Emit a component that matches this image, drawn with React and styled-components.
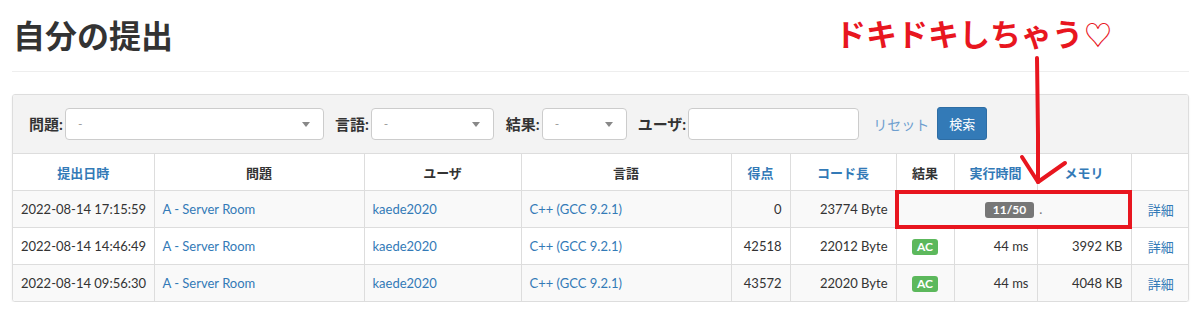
import React from 'react';
import styled, { createGlobalStyle } from 'styled-components';

const GlobalStyle = createGlobalStyle`
  html, body { margin: 0; padding: 0; background: #fff; }
  body {
    font-family: Lato, "Noto Sans CJK JP", sans-serif;
    color: #333;
    font-size: 14px;
  }
`;

const RED = '#e8161f';
const LINK = '#337ab7';

const columns = [
  { label: '提出日時', width: 141, link: true },
  { label: '問題', width: 210 },
  { label: 'ユーザ', width: 157 },
  { label: '言語', width: 210 },
  { label: '得点', width: 59, link: true },
  { label: 'コード長', width: 106, link: true },
  { label: '結果', width: 58 },
  { label: '実行時間', width: 83, link: true },
  { label: 'メモリ', width: 94, link: true },
  { label: '', width: 59 },
];

const rows = [
  { date: '2022-08-14 17:15:59', score: '0', length: '23774 Byte', judging: '11/50' },
  { date: '2022-08-14 14:46:49', score: '42518', length: '22012 Byte', result: 'AC', time: '44 ms', memory: '3992 KB' },
  { date: '2022-08-14 09:56:30', score: '43572', length: '22020 Byte', result: 'AC', time: '44 ms', memory: '4048 KB' },
];

const Page = styled.div`
  position: relative;
  padding: 16px 11px 0 12px;
`;

const Title = styled.h2`
  margin: 0 0 0 1px;
  font-size: 32px;
  line-height: 36px;
  font-weight: 700;
  color: #333;
  font-family: "Noto Sans CJK JP", sans-serif;
`;

const Rule = styled.hr`
  margin: 19px 0 22px;
  border: 0;
  border-top: 1px solid #eee;
`;

const Panel = styled.div`
  border: 1px solid #ddd;
  border-radius: 3px;
  box-shadow: 0 1px 2px rgba(0, 0, 0, 0.08);
  overflow: hidden;
`;

const FilterBar = styled.div`
  display: flex;
  align-items: center;
  background: #f3f3f3;
  padding: 12px 16px 13px 16px;
  border-bottom: 1px solid #ddd;
`;

const Label = styled.span`
  font-weight: 700;
  font-size: 15px;
  margin-right: 2px;
  margin-left: ${p => p.$gap || 0}px;
  white-space: nowrap;
`;

const Select = styled.div`
  position: relative;
  width: ${p => p.$w}px;
  height: 32px;
  box-sizing: border-box;
  background: #fff;
  border: 1px solid #ccc;
  border-radius: 4px;
  display: flex;
  align-items: center;
  padding-left: 12px;
  color: #999;
  font-size: 12px;

  &::after {
    content: '';
    position: absolute;
    right: 13px;
    top: 13px;
    border-left: 4px solid transparent;
    border-right: 4px solid transparent;
    border-top: 5px solid #888;
  }
`;

const TextInput = styled.div`
  width: ${p => p.$w}px;
  height: 32px;
  box-sizing: border-box;
  background: #fff;
  border: 1px solid #ccc;
  border-radius: 4px;
`;

const ResetLink = styled.span`
  color: #6f9fcf;
  font-size: 14px;
  margin-left: 14px;
`;

const SearchButton = styled.span`
  margin-left: 8px;
  background: ${LINK};
  color: #fff;
  border: 1px solid #2e6da4;
  border-radius: 3px;
  height: 33px;
  width: 50px;
  box-sizing: border-box;
  display: flex;
  align-items: center;
  justify-content: center;
  font-size: 13px;
`;

const Table = styled.table`
  width: 100%;
  border-collapse: collapse;
  table-layout: fixed;
  font-size: 13px;
`;

const Th = styled.th`
  height: 36px;
  padding: 0 8px;
  border-left: 1px solid #ddd;
  font-weight: 700;
  font-size: 13px;
  color: ${p => (p.$link ? LINK : '#333')};
  text-align: center;
  &:first-child { border-left: 0; }
`;

const Row = styled.tr`
  background: ${p => (p.$odd ? '#f9f9f9' : '#fff')};
  border-top: 1px solid #ddd;
`;

const Td = styled.td`
  height: 36px;
  padding: 0 8px;
  border-left: 1px solid #ddd;
  text-align: ${p => p.$align || 'left'};
  color: ${p => (p.$link ? LINK : '#333')};
  white-space: nowrap;
  overflow: hidden;
  &:first-child { border-left: 0; }
`;

const Badge = styled.span`
  display: inline-block;
  padding: 2px ${p => (p.$ok ? 5 : 8)}px 2px;
  border-radius: 3px;
  font-size: 12px;
  font-weight: 700;
  line-height: 12px;
  color: #fff;
  background: ${p => (p.$ok ? '#5cb85c' : '#777')};
`;

const Dot = styled.span`
  margin-left: 5px;
  color: #777;
`;

const Note = styled.div`
  position: absolute;
  left: 835px;
  top: 13px;
  color: ${RED};
  font-size: 31px;
  font-weight: 700;
  font-family: "Noto Sans CJK JP", sans-serif;
  line-height: 40px;
`;

const Heart = styled.span`
  font-size: 28px;
  font-weight: 400;
  margin-left: 1px;
`;

const Arrow = styled.svg`
  position: absolute;
  left: 1010px;
  top: 55px;
  overflow: visible;
`;

const Highlight = styled.div`
  position: absolute;
  left: 895px;
  top: 190px;
  width: 237px;
  height: 39px;
  box-sizing: border-box;
  border: 4px solid ${RED};
`;

export default function App() {
  return (
    <>
      <GlobalStyle />
      <Page>
        <Title>自分の提出</Title>
        <Rule />
        <Panel>
          <FilterBar>
            <Label>問題:</Label>
            <Select $w={259}>-</Select>
            <Label $gap={11}>言語:</Label>
            <Select $w={123}>-</Select>
            <Label $gap={12}>結果:</Label>
            <Select $w={85}>-</Select>
            <Label $gap={11}>ユーザ:</Label>
            <TextInput $w={171} />
            <ResetLink>リセット</ResetLink>
            <SearchButton>検索</SearchButton>
          </FilterBar>
          <Table>
            <colgroup>
              {columns.map((c, i) => (
                <col key={i} style={{ width: c.width }} />
              ))}
            </colgroup>
            <thead>
              <tr>
                {columns.map((c, i) => (
                  <Th key={i} $link={c.link}>{c.label}</Th>
                ))}
              </tr>
            </thead>
            <tbody>
              {rows.map((r, i) => (
                <Row key={i} $odd={i % 2 === 0}>
                  <Td>{r.date}</Td>
                  <Td $link>A - Server Room</Td>
                  <Td $link>kaede2020</Td>
                  <Td $link>C++ (GCC 9.2.1)</Td>
                  <Td $align="right">{r.score}</Td>
                  <Td $align="right">{r.length}</Td>
                  {r.judging ? (
                    <Td colSpan={3} $align="center">
                      <Badge>{r.judging}</Badge>
                      <Dot>.</Dot>
                    </Td>
                  ) : (
                    <>
                      <Td $align="center"><Badge $ok>{r.result}</Badge></Td>
                      <Td $align="right">{r.time}</Td>
                      <Td $align="right">{r.memory}</Td>
                    </>
                  )}
                  <Td $align="center" $link>詳細</Td>
                </Row>
              ))}
            </tbody>
          </Table>
        </Panel>
        <Note>ドキドキしちゃう<Heart>♡</Heart></Note>
        <Arrow width="60" height="130" viewBox="0 0 60 130">
          <path
            d="M27 3 L27.5 40 L28 80 L28 127"
            fill="none"
            stroke={RED}
            strokeWidth="4"
            strokeLinecap="round"
          />
          <path
            d="M12 102 L28 127 L55 108"
            fill="none"
            stroke={RED}
            strokeWidth="4"
            strokeLinecap="round"
            strokeLinejoin="round"
          />
        </Arrow>
        <Highlight />
      </Page>
    </>
  );
}
